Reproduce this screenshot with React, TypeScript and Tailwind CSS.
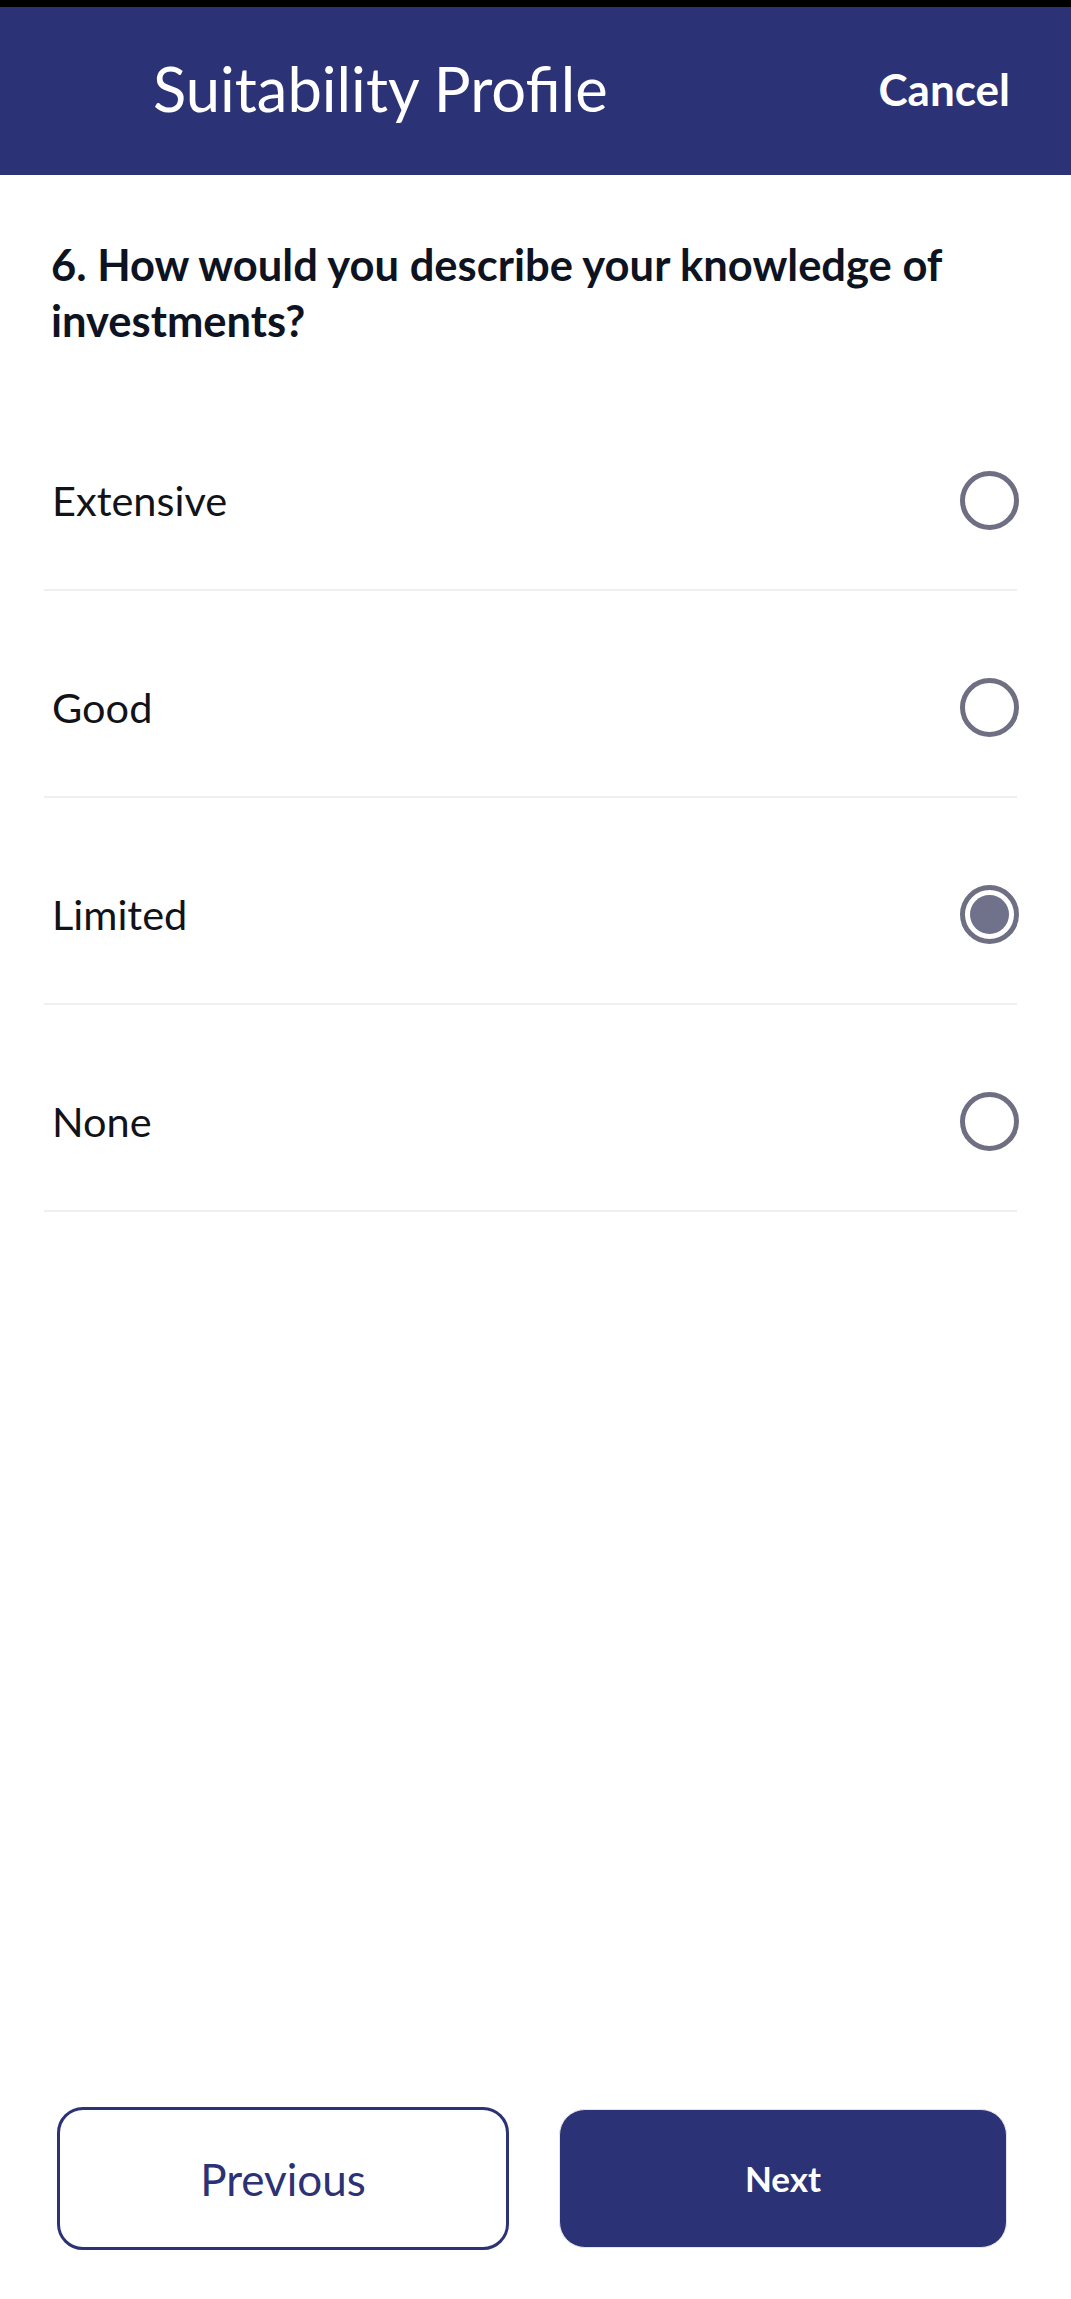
import { useState } from "react";

const options = ["Extensive", "Good", "Limited", "None"];

function Radio({ checked }: { checked: boolean }) {
  return (
    <span className="-mr-[2px] flex h-[59px] w-[59px] shrink-0 items-center justify-center rounded-full border-[5px] border-[#6e6f82]">
      {checked && <span className="h-[39px] w-[39px] rounded-full bg-[#70718a]" />}
    </span>
  );
}

export default function App() {
  const [selected, setSelected] = useState("Limited");

  return (
    <div className="flex h-[2299px] flex-col bg-white font-['Lato','Noto_Sans',sans-serif]">
      <div className="h-[7px] bg-black" />
      <header className="flex h-[168px] items-center justify-between bg-[#2b3275] pb-[4px] pl-[153px] pr-[61px] text-white">
        <h1 className="text-[61.5px] leading-none">Suitability Profile</h1>
        <button className="text-[44px] font-bold leading-none">Cancel</button>
      </header>

      <h2 className="mt-[61px] pl-[51px] pr-[60px] text-[43.5px] font-bold leading-[56px] text-[#0d1321]">
        6. How would you describe your knowledge of investments?
      </h2>

      <ul className="ml-[44px] mr-[54px] mt-[36px]">
        {options.map((opt) => (
          <li
            key={opt}
            onClick={() => setSelected(opt)}
            className="mt-[27px] flex h-[180px] cursor-pointer items-center justify-between border-b-2 border-[#efeff2] pl-[8px]"
          >
            <span className="text-[41.5px] text-[#111318]">{opt}</span>
            <Radio checked={selected === opt} />
          </li>
        ))}
      </ul>

      <div className="flex-1" />

      <footer className="flex items-center gap-[50px] pb-[49px] pl-[57px] pr-[64px]">
        <button className="h-[143px] flex-1 rounded-[26px] border-[3px] border-[#2b3275] text-[44px] text-[#2b3275]">
          Previous
        </button>
        <button className="h-[139px] flex-1 rounded-[26px] border border-[#e4e4ea] bg-[#2b3275] text-[35px] font-bold text-white">
          Next
        </button>
      </footer>
    </div>
  );
}
